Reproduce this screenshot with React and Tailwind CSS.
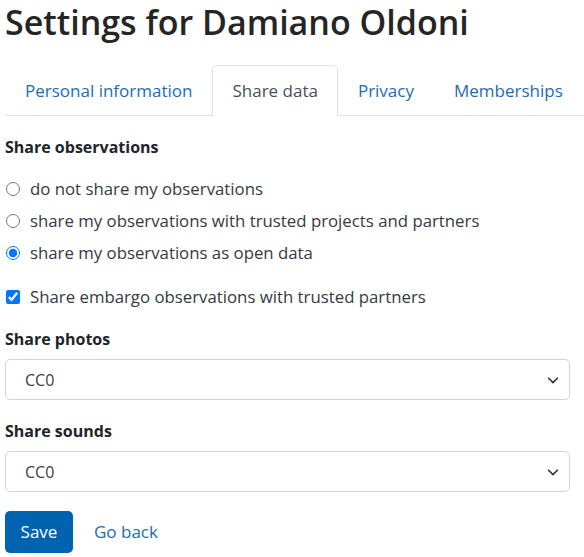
import React, { useState } from 'react';

const tabs = ['Personal information', 'Share data', 'Privacy', 'Memberships'];

const radioOptions = [
  { id: 'none', label: 'do not share my observations' },
  { id: 'trusted', label: 'share my observations with trusted projects and partners' },
  { id: 'open', label: 'share my observations as open data' },
];

const Chevron = () => (
  <svg className="absolute right-[10px] top-1/2 -translate-y-1/2 pointer-events-none" width="14" height="14" viewBox="0 0 16 16" fill="none">
    <path d="M3 6l5 5 5-5" stroke="#343a40" strokeWidth="2" strokeLinecap="round" strokeLinejoin="round" />
  </svg>
);

const LicenseSelect = ({ label }) => (
  <div>
    <p className="font-bold text-[16px] text-[#212529] mb-[8px] leading-[24px]">{label}</p>
    <div className="relative">
      <select
        defaultValue="CC0"
        className="appearance-none w-[565px] h-[41px] border border-[#ced4da] rounded-[5px] pl-[19px] text-[16px] text-[#3d3d3d] bg-white"
      >
        <option>CC0</option>
        <option>CC-BY</option>
        <option>CC-BY-NC</option>
      </select>
      <Chevron />
    </div>
  </div>
);

const App = () => {
  const [active] = useState('Share data');
  const [share, setShare] = useState('open');
  const [embargo, setEmbargo] = useState(true);

  return (
    <div className="min-h-screen bg-white pl-[5px] text-[#212529] overflow-hidden" style={{ fontFamily: '"Open Sans", sans-serif' }}>
      <h1 className="text-[34px] font-semibold leading-[42px] pt-[1px] text-[#252525]">Settings for Damiano Oldoni</h1>

      {/* Tabs */}
      <div className="mt-[22px] flex border-b border-[#dee2e6] w-[579px]">
        {tabs.map((t) => {
          const isActive = active === t;
          return (
            <button
              key={t}
              className={`shrink-0 whitespace-nowrap px-[19px] h-[51px] text-[17px] -mb-px rounded-t-[5px] border ${
                isActive
                  ? 'border-[#dee2e6] border-b-white bg-white text-[#495057]'
                  : 'border-transparent text-[#1c6cb3]'
              }`}
            >
              {t}
            </button>
          );
        })}
      </div>

      <div className="pt-[19px] w-[565px]">
        <p className="font-bold text-[16px] leading-[24px]">Share observations</p>

        <div className="mt-[18px] flex flex-col gap-[8px]">
          {radioOptions.map((o) => (
            <label key={o.id} className="flex items-center gap-[10px] text-[16.8px] leading-[24px] text-[#343a40]">
              <input
                type="radio"
                name="share"
                checked={share === o.id}
                onChange={() => setShare(o.id)}
                className="w-[14px] h-[14px] ml-[1px] accent-[#0075ff]"
              />
              {o.label}
            </label>
          ))}
        </div>

        <label className="mt-[20px] flex items-center gap-[10px] text-[16.8px] leading-[24px] text-[#343a40]">
          <input
            type="checkbox"
            checked={embargo}
            onChange={() => setEmbargo(!embargo)}
            className="w-[14px] h-[14px] ml-[1px] accent-[#0075ff]"
          />
          Share embargo observations with trusted partners
        </label>

        <div className="mt-[18px] flex flex-col gap-[19px]">
          <LicenseSelect label="Share photos" />
          <LicenseSelect label="Share sounds" />
        </div>

        <div className="mt-[19px] flex items-center gap-[21px]">
          <button className="h-[42px] w-[68px] bg-[#0063b0] text-white text-[17px] rounded-[5px]">Save</button>
          <a href="#" className="text-[17px] text-[#1c6cb3]">Go back</a>
        </div>
      </div>
    </div>
  );
};

export default App;
